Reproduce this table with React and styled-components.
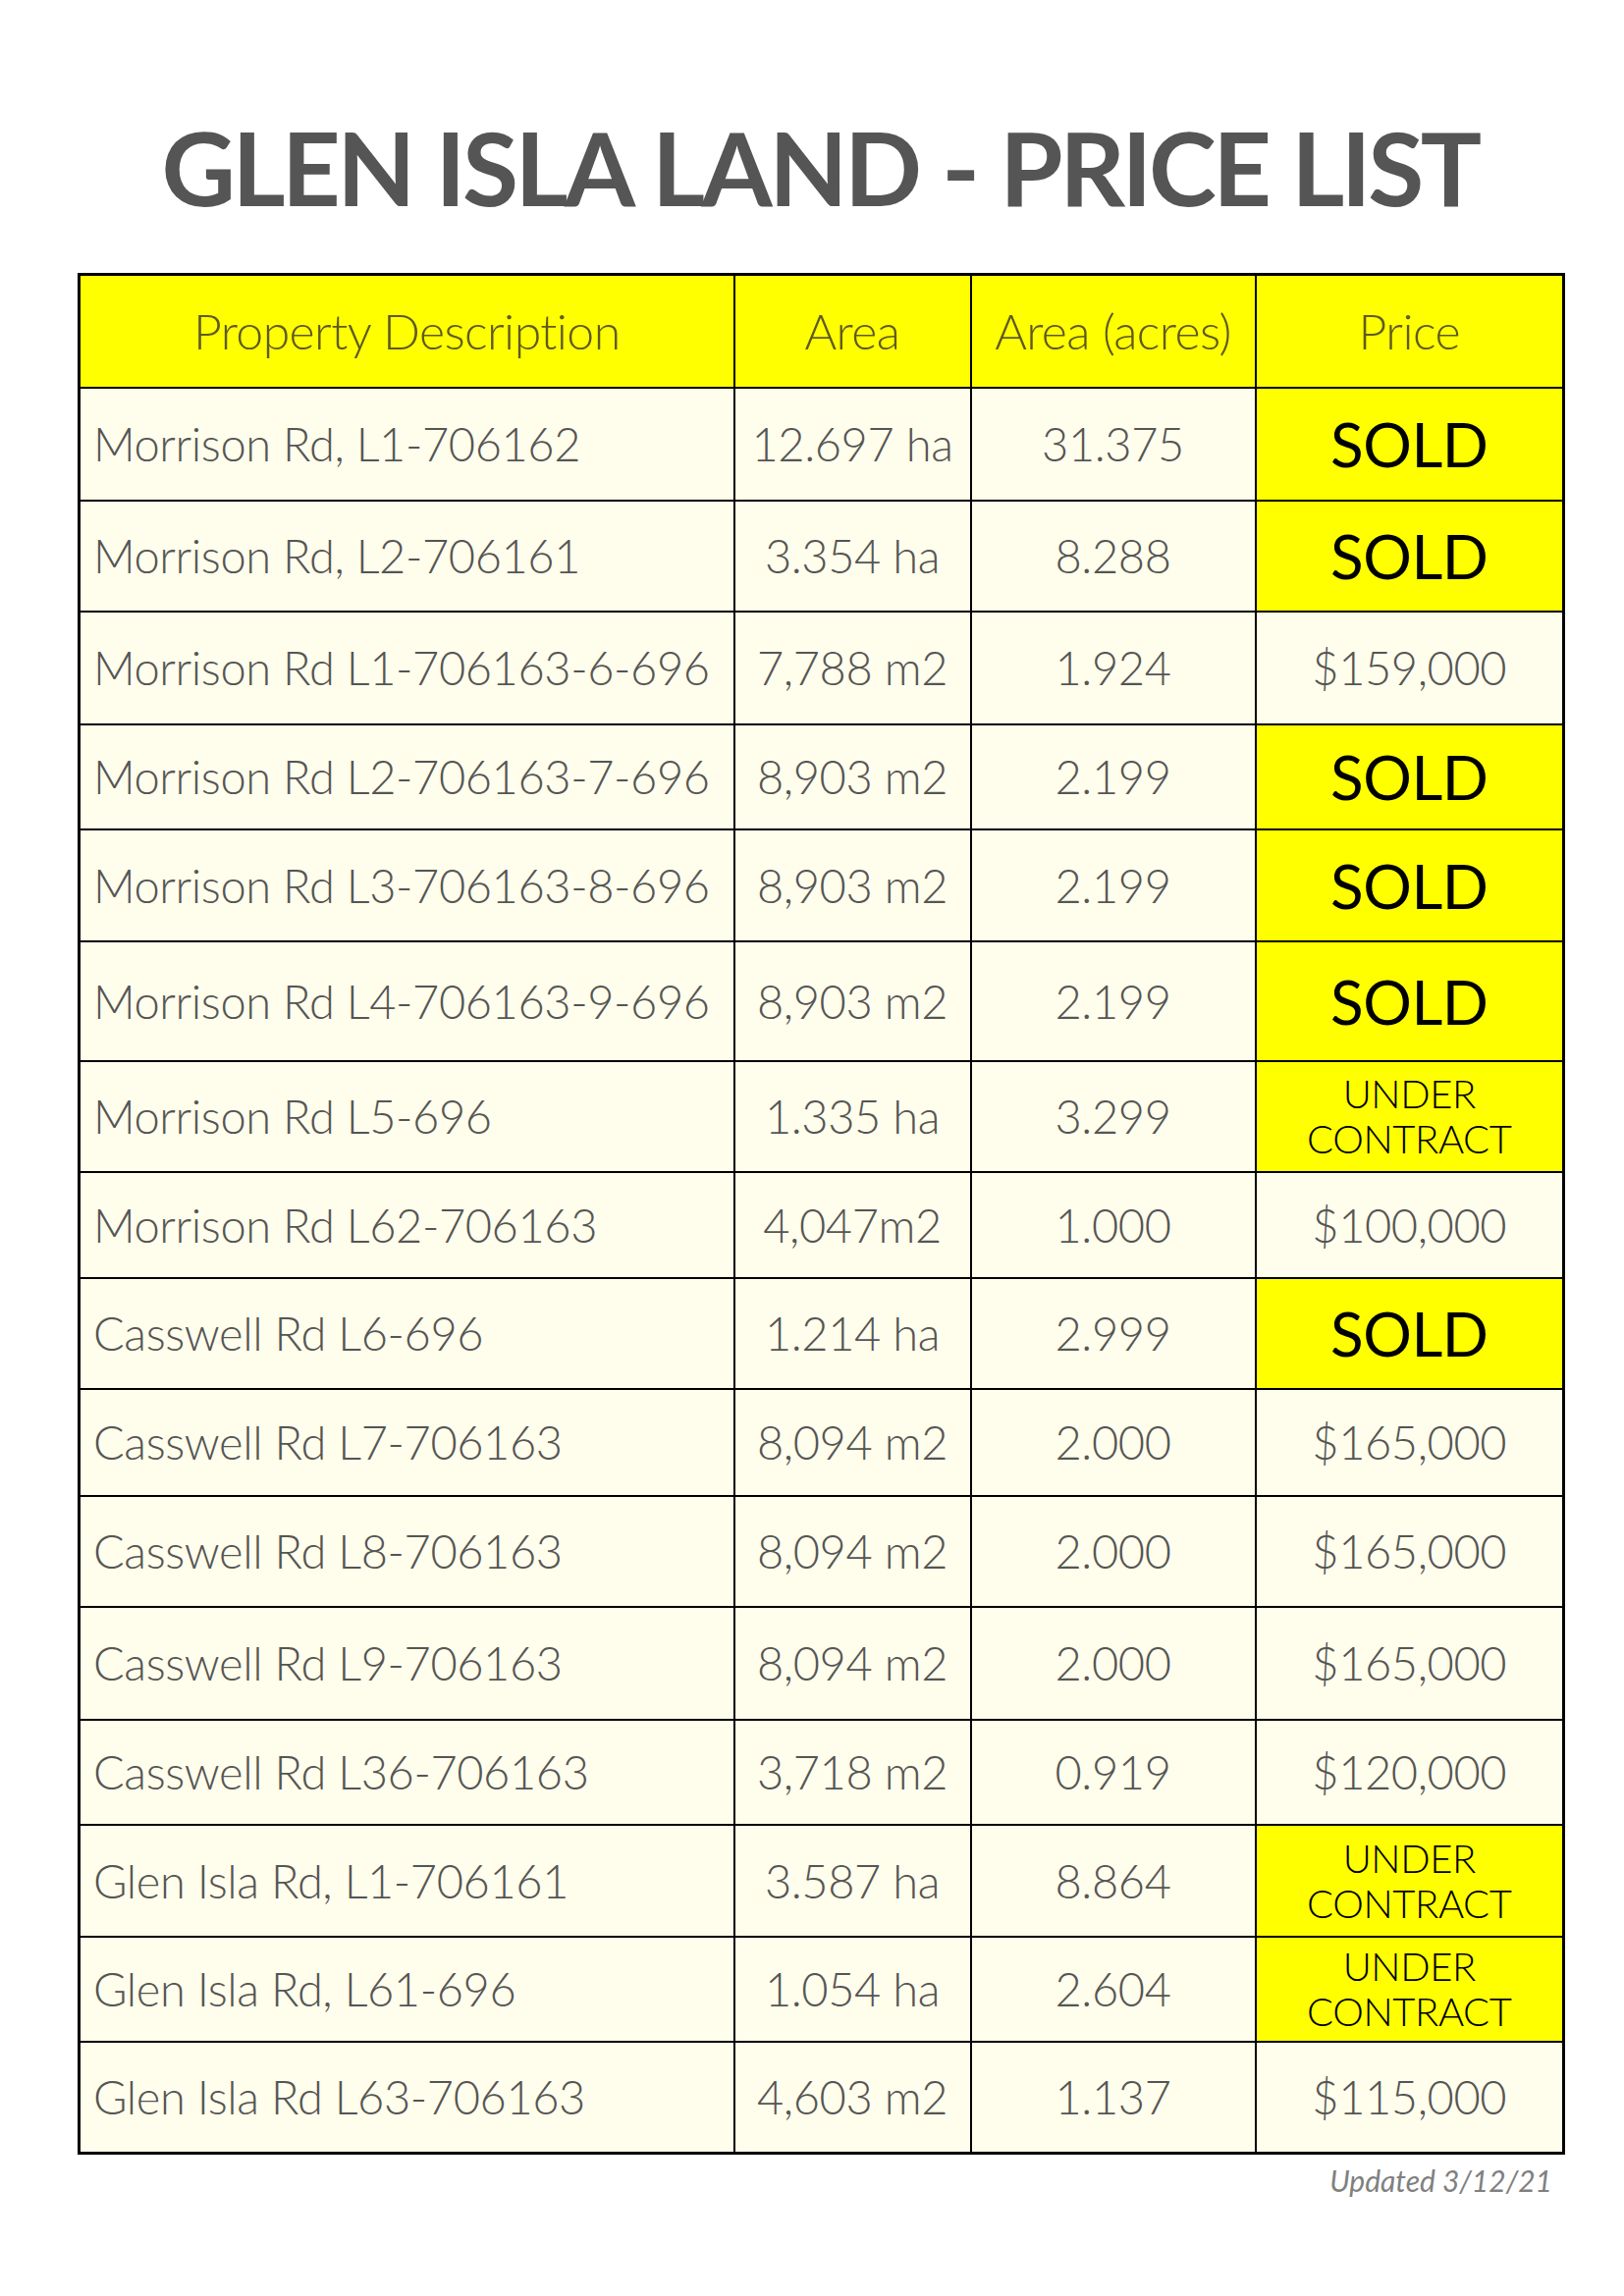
import styled, { createGlobalStyle } from "styled-components";

const Global = createGlobalStyle`
  body {
    margin: 0;
    background: #fff;
    font-family: Lato, "Open Sans", sans-serif;
  }
`;

const Page = styled.div`
  width: 1654px;
  min-height: 2339px;
  padding: 106px 0 0 79px;
  box-sizing: border-box;
`;

const Title = styled.h1`
  width: 1512px;
  margin: 0 0 44px;
  text-align: center;
  font-size: 104px;
  line-height: 128px;
  font-weight: 700;
  color: #555;
  letter-spacing: -3.5px;
  word-spacing: 2px;
`;

const Table = styled.table`
  width: 1512px;
  border-collapse: collapse;
  table-layout: fixed;
  border: 3px solid #000;
`;

const Head = styled.th`
  background: #ffff00;
  border: 2px solid #000;
  font-weight: 300;
  font-size: 50px;
  letter-spacing: -0.6px;
  color: #5e5a1f;
  padding: 0;
`;

const Cell = styled.td`
  background: #fffdeb;
  border: 2px solid #000;
  font-weight: 300;
  font-size: 47px;
  letter-spacing: -0.4px;
  color: #555;
  padding: 0 ${(p) => (p.$left ? "13px" : "0")};
  text-align: ${(p) => (p.$left ? "left" : "center")};
  white-space: nowrap;
`;

const PriceCell = styled(Cell)`
  background: ${(p) => (p.$status ? "#ffff00" : "#fffdeb")};
  color: ${(p) => (p.$status ? "#000" : "#555")};
  font-weight: ${(p) => (p.$status === "sold" ? 400 : 300)};
  font-size: ${(p) =>
    p.$status === "sold" ? "62px" : p.$status === "contract" ? "40px" : "47px"};
  line-height: ${(p) => (p.$status === "contract" ? "46px" : "normal")};
  white-space: normal;
`;

const Updated = styled.div`
  width: 1502px;
  text-align: right;
  font-style: italic;
  font-size: 30px;
  color: #808080;
  margin-top: 8px;
`;

const rows = [
  ["Morrison Rd, L1-706162", "12.697 ha", "31.375", "SOLD", 115],
  ["Morrison Rd, L2-706161", "3.354 ha", "8.288", "SOLD", 113],
  ["Morrison Rd L1-706163-6-696", "7,788 m2", "1.924", "$159,000", 115],
  ["Morrison Rd L2-706163-7-696", "8,903 m2", "2.199", "SOLD", 107],
  ["Morrison Rd L3-706163-8-696", "8,903 m2", "2.199", "SOLD", 114],
  ["Morrison Rd L4-706163-9-696", "8,903 m2", "2.199", "SOLD", 122],
  ["Morrison Rd L5-696", "1.335 ha", "3.299", "UNDER CONTRACT", 113],
  ["Morrison Rd L62-706163", "4,047m2", "1.000", "$100,000", 108],
  ["Casswell Rd L6-696", "1.214 ha", "2.999", "SOLD", 113],
  ["Casswell Rd L7-706163", "8,094 m2", "2.000", "$165,000", 109],
  ["Casswell Rd L8-706163", "8,094 m2", "2.000", "$165,000", 113],
  ["Casswell Rd L9-706163", "8,094 m2", "2.000", "$165,000", 115],
  ["Casswell Rd L36-706163", "3,718 m2", "0.919", "$120,000", 107],
  ["Glen Isla Rd, L1-706161", "3.587 ha", "8.864", "UNDER CONTRACT", 114],
  ["Glen Isla Rd, L61-696", "1.054 ha", "2.604", "UNDER CONTRACT", 107],
  ["Glen Isla Rd L63-706163", "4,603 m2", "1.137", "$115,000", 114],
];

function statusOf(price) {
  if (price === "SOLD") return "sold";
  if (price === "UNDER CONTRACT") return "contract";
  return null;
}

export default function App() {
  return (
    <Page>
      <Global />
      <Title>GLEN ISLA LAND - PRICE LIST</Title>
      <Table>
        <colgroup>
          <col style={{ width: 667 }} />
          <col style={{ width: 241 }} />
          <col style={{ width: 290 }} />
          <col style={{ width: 314 }} />
        </colgroup>
        <thead>
          <tr style={{ height: 115 }}>
            <Head>Property Description</Head>
            <Head>Area</Head>
            <Head>Area (acres)</Head>
            <Head>Price</Head>
          </tr>
        </thead>
        <tbody>
          {rows.map(([desc, area, acres, price, h]) => (
            <tr key={desc} style={{ height: h }}>
              <Cell $left>{desc}</Cell>
              <Cell>{area}</Cell>
              <Cell>{acres}</Cell>
              <PriceCell $status={statusOf(price)}>
                {price === "UNDER CONTRACT" ? (
                  <>
                    UNDER
                    <br />
                    CONTRACT
                  </>
                ) : (
                  price
                )}
              </PriceCell>
            </tr>
          ))}
        </tbody>
      </Table>
      <Updated>Updated 3/12/21</Updated>
    </Page>
  );
}
